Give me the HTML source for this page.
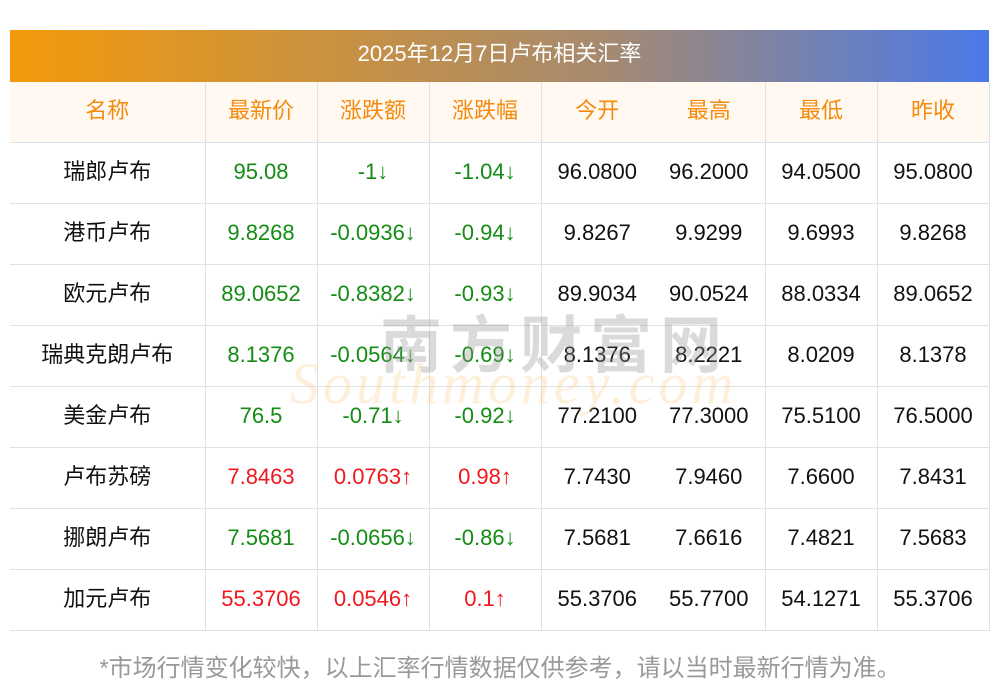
<!DOCTYPE html>
<html><head><meta charset="utf-8"><style>
body{margin:0;background:#fff;width:1000px;height:697px;overflow:hidden;position:relative;font-family:"Liberation Sans","Noto Sans CJK SC",sans-serif;}
.title{position:absolute;left:10px;top:30px;width:979px;height:52px;background:linear-gradient(90deg,#f39a0a,#a78a6e 60%,#4a7ae8);color:#fff;font-size:22px;line-height:48px;text-align:center;}
table{position:absolute;left:10px;top:82px;border-collapse:collapse;table-layout:fixed;width:979px;}
td{height:60px;border-bottom:1px solid #dfe1ea;text-align:center;font-size:22px;padding:0;color:#111;}
td span{position:relative;top:-1px;}
td.n span,tr.h td span{top:-3px;}
tr td{border-right:1px solid #dfe1ea;}
tr td:nth-child(5){border-right:none;}
tr.h td{background:#fff9f2;color:#f58a0c;height:60px;}
.g{color:#148c14}.r{color:#f0181e}
.foot{position:absolute;left:0;width:1000px;top:648px;text-align:center;color:#999;font-size:24px;}
.wm{position:absolute;left:380px;top:295px;font-size:62px;color:rgba(150,150,150,.35);letter-spacing:8px;font-weight:bold;}
.wm2{position:absolute;left:290px;top:350px;font-size:58px;color:rgba(253,210,150,.35);font-family:"Liberation Serif",serif;font-style:italic;letter-spacing:4px;}
</style></head><body>
<div class="title">2025年12月7日卢布相关汇率</div>
<table>
<colgroup><col style="width:195px"><col style="width:112px"><col style="width:112px"><col style="width:112px"><col style="width:112px"><col style="width:112px"><col style="width:112px"><col style="width:112px"></colgroup>
<tr class="h"><td><span>名称</span></td><td><span>最新价</span></td><td><span>涨跌额</span></td><td><span>涨跌幅</span></td><td><span>今开</span></td><td><span>最高</span></td><td><span>最低</span></td><td><span>昨收</span></td></tr>
<tr><td class="n"><span>瑞郎卢布</span></td><td class="g"><span>95.08</span></td><td class="g"><span>-1↓</span></td><td class="g"><span>-1.04↓</span></td><td><span>96.0800</span></td><td><span>96.2000</span></td><td><span>94.0500</span></td><td><span>95.0800</span></td></tr>
<tr><td class="n"><span>港币卢布</span></td><td class="g"><span>9.8268</span></td><td class="g"><span>-0.0936↓</span></td><td class="g"><span>-0.94↓</span></td><td><span>9.8267</span></td><td><span>9.9299</span></td><td><span>9.6993</span></td><td><span>9.8268</span></td></tr>
<tr><td class="n"><span>欧元卢布</span></td><td class="g"><span>89.0652</span></td><td class="g"><span>-0.8382↓</span></td><td class="g"><span>-0.93↓</span></td><td><span>89.9034</span></td><td><span>90.0524</span></td><td><span>88.0334</span></td><td><span>89.0652</span></td></tr>
<tr><td class="n"><span>瑞典克朗卢布</span></td><td class="g"><span>8.1376</span></td><td class="g"><span>-0.0564↓</span></td><td class="g"><span>-0.69↓</span></td><td><span>8.1376</span></td><td><span>8.2221</span></td><td><span>8.0209</span></td><td><span>8.1378</span></td></tr>
<tr><td class="n"><span>美金卢布</span></td><td class="g"><span>76.5</span></td><td class="g"><span>-0.71↓</span></td><td class="g"><span>-0.92↓</span></td><td><span>77.2100</span></td><td><span>77.3000</span></td><td><span>75.5100</span></td><td><span>76.5000</span></td></tr>
<tr><td class="n"><span>卢布苏磅</span></td><td class="r"><span>7.8463</span></td><td class="r"><span>0.0763↑</span></td><td class="r"><span>0.98↑</span></td><td><span>7.7430</span></td><td><span>7.9460</span></td><td><span>7.6600</span></td><td><span>7.8431</span></td></tr>
<tr><td class="n"><span>挪朗卢布</span></td><td class="g"><span>7.5681</span></td><td class="g"><span>-0.0656↓</span></td><td class="g"><span>-0.86↓</span></td><td><span>7.5681</span></td><td><span>7.6616</span></td><td><span>7.4821</span></td><td><span>7.5683</span></td></tr>
<tr><td class="n"><span>加元卢布</span></td><td class="r"><span>55.3706</span></td><td class="r"><span>0.0546↑</span></td><td class="r"><span>0.1↑</span></td><td><span>55.3706</span></td><td><span>55.7700</span></td><td><span>54.1271</span></td><td><span>55.3706</span></td></tr>
</table>
<div class="wm">南方财富网</div>
<div class="wm2">Southmoney.com</div>
<div class="foot">*市场行情变化较快，以上汇率行情数据仅供参考，请以当时最新行情为准。</div>
</body></html>
